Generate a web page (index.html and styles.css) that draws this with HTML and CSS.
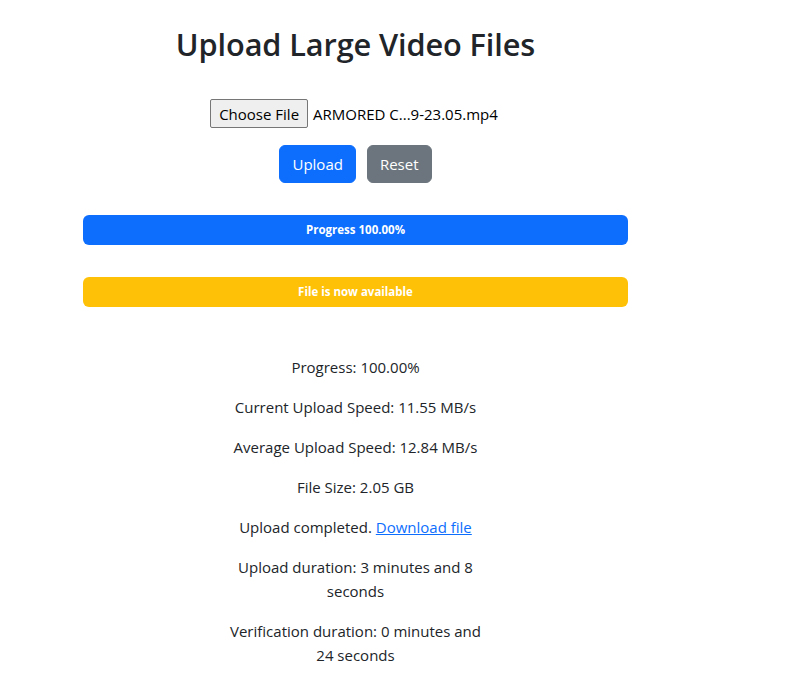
FILE: index.html
```html
<!DOCTYPE html>
<html lang="en">
<head>
<meta charset="utf-8">
<title>Upload Large Video Files</title>
<link rel="stylesheet" href="styles.css">
</head>
<body>
<main class="app">
  <h1 class="title">Upload Large Video Files</h1>
  <div class="file-row">
    <span class="file-btn">Choose File</span>
    <span class="file-name">ARMORED C...9-23.05.mp4</span>
  </div>
  <div class="actions">
    <button class="btn btn-primary" type="button">Upload</button>
    <button class="btn btn-secondary" type="button">Reset</button>
  </div>
  <div class="bar bar-blue">Progress 100.00%</div>
  <div class="bar bar-yellow">File is now available</div>
  <div class="stats">
    <p>Progress: 100.00%</p>
    <p>Current Upload Speed: 11.55 MB/s</p>
    <p>Average Upload Speed: 12.84 MB/s</p>
    <p>File Size: 2.05 GB</p>
    <p>Upload completed. <a href="#">Download file</a></p>
    <p>Upload duration: 3 minutes and 8 seconds</p>
    <p>Verification duration: 0 minutes and 24 seconds</p>
  </div>
</main>
</body>
</html>
```
FILE: styles.css
```css
* { box-sizing: border-box; }
html, body { margin: 0; padding: 0; background: #fff; }
body {
  font-family: "Open Sans", "Noto Sans", sans-serif;
  font-size: 15px;
  line-height: 24px;
  color: #212529;
}
.app {
  width: 545px;
  margin-left: 83px;
  padding-top: 24px;
  text-align: center;
}
.title {
  margin: 0;
  font-size: 30.7px;
  line-height: 40px;
  font-weight: 600;
  letter-spacing: -0.1px;
}
.file-row {
  margin-top: 35px;
  display: flex;
  justify-content: center;
  align-items: center;
  gap: 5px;
  height: 29px;
}
.file-btn {
  display: inline-flex;
  align-items: center;
  height: 29px;
  padding: 0 8px;
  background: #efefef;
  border: 1px solid #767676;
  border-radius: 2px;
  color: #000;
}
.file-name { color: #000; padding-right: 3px; }
.actions {
  margin-top: 17px;
  display: flex;
  justify-content: center;
  gap: 11px;
}
.btn {
  font: inherit;
  height: 38px;
  padding: 6px 12px;
  border: 1px solid transparent;
  border-radius: 6px;
  color: #fff;
  line-height: 24px;
}
.btn-primary { background: #0d6efd; border-color: #0d6efd; }
.btn-secondary { background: #6c757d; border-color: #6c757d; }
.bar {
  height: 30px;
  border-radius: 6px;
  color: #fff;
  font-size: 11.5px;
  font-weight: 700;
  display: flex;
  align-items: center;
  justify-content: center;
}
.bar-blue { margin-top: 32px; background: #0d6efd; }
.bar-yellow { margin-top: 32px; background: #ffc107; }
.stats {
  width: 256px;
  margin: 48px auto 0;
}
.stats p { margin: 0 0 16px; }
.stats a { color: #0d6efd; text-decoration: underline; }
```
